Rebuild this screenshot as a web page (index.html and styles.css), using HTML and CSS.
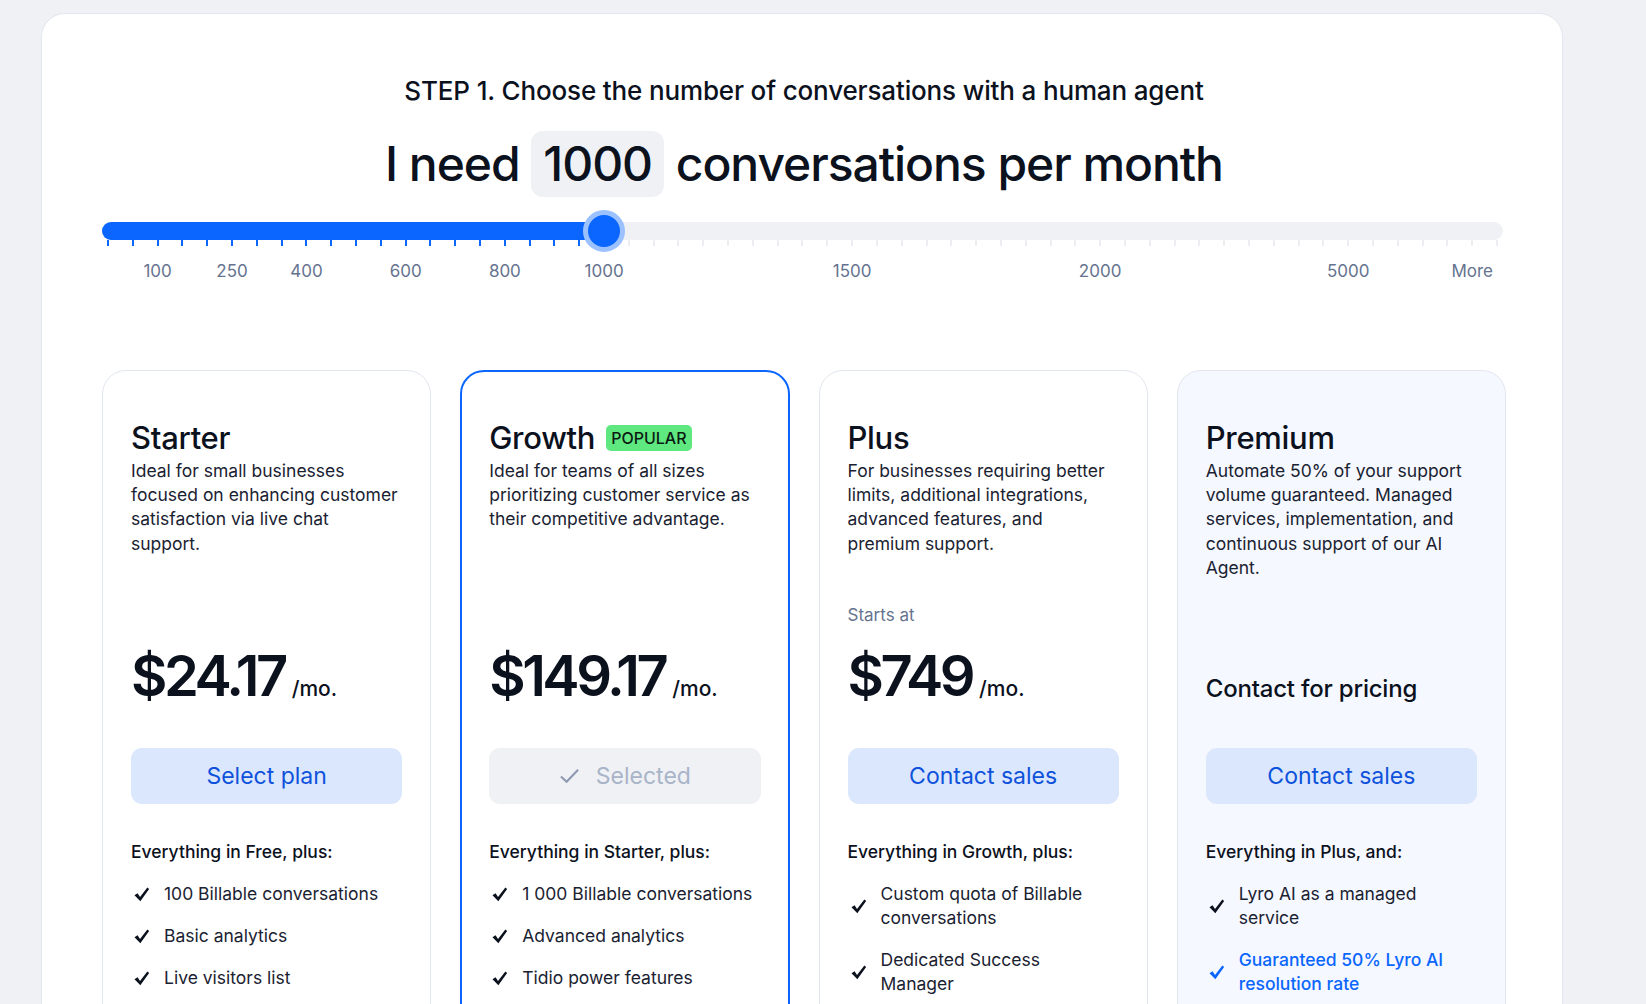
FILE: index.html
```html
<!DOCTYPE html>
<html lang="en">
<head>
<meta charset="utf-8">
<title>Pricing</title>
<link rel="stylesheet" href="styles.css">
</head>
<body>
<div class="page">
  <section class="panel">
    <h2 class="step">STEP 1. Choose the number of conversations with a human agent</h2>
    <h1 class="need">I need <span class="qty">1000</span> conversations per month</h1>

    <div class="slider">
      <div class="track">
        <div class="fill" style="width:35.83%"></div>
        <div class="thumb" style="left:35.83%"></div>
      </div>
      <div class="scale">
        <span class="tick on"></span><span class="tick on"></span><span class="tick on"></span><span class="tick on"></span><span class="tick on"></span>
        <span class="tick on"></span><span class="tick on"></span><span class="tick on"></span><span class="tick on"></span><span class="tick on"></span>
        <span class="tick on"></span><span class="tick on"></span><span class="tick on"></span><span class="tick on"></span><span class="tick on"></span>
        <span class="tick on"></span><span class="tick on"></span><span class="tick on"></span><span class="tick on"></span><span class="tick on"></span>
        <span class="tick"></span><span class="tick"></span><span class="tick"></span><span class="tick"></span><span class="tick"></span>
        <span class="tick"></span><span class="tick"></span><span class="tick"></span><span class="tick"></span><span class="tick"></span>
        <span class="tick"></span><span class="tick"></span><span class="tick"></span><span class="tick"></span><span class="tick"></span>
        <span class="tick"></span><span class="tick"></span><span class="tick"></span><span class="tick"></span><span class="tick"></span>
        <span class="tick"></span><span class="tick"></span><span class="tick"></span><span class="tick"></span><span class="tick"></span>
        <span class="tick"></span><span class="tick"></span><span class="tick"></span><span class="tick"></span><span class="tick"></span>
        <span class="tick"></span><span class="tick"></span><span class="tick"></span><span class="tick"></span><span class="tick"></span>
        <span class="tick"></span><span class="tick"></span>

        <span class="lbl" style="grid-column:3"><span>100</span></span>
        <span class="lbl" style="grid-column:6"><span>250</span></span>
        <span class="lbl" style="grid-column:9"><span>400</span></span>
        <span class="lbl" style="grid-column:13"><span>600</span></span>
        <span class="lbl" style="grid-column:17"><span>800</span></span>
        <span class="lbl" style="grid-column:21"><span>1000</span></span>
        <span class="lbl" style="grid-column:31"><span>1500</span></span>
        <span class="lbl" style="grid-column:41"><span>2000</span></span>
        <span class="lbl" style="grid-column:51"><span>5000</span></span>
        <span class="lbl" style="grid-column:56"><span>More</span></span>
      </div>
    </div>

    <div class="plans">
      <article class="card">
        <h3 class="name">Starter</h3>
        <p class="desc">Ideal for small businesses focused on enhancing customer satisfaction via live chat support.</p>
        <div class="price-area">
          <div class="price"><span class="amount">$24.17</span><span class="per">/mo.</span></div>
        </div>
        <button class="btn">Select plan</button>
        <p class="incl">Everything in Free, plus:</p>
        <ul class="feats">
          <li><svg class="chk" viewBox="0 0 16 16"><path d="M1.4 8.6 L4.3 6.9 L6.6 10.3 L13.5 1.4 L15.2 2.8 L6.9 14.4 Z"/></svg><span>100 Billable conversations</span></li>
          <li><svg class="chk" viewBox="0 0 16 16"><path d="M1.4 8.6 L4.3 6.9 L6.6 10.3 L13.5 1.4 L15.2 2.8 L6.9 14.4 Z"/></svg><span>Basic analytics</span></li>
          <li><svg class="chk" viewBox="0 0 16 16"><path d="M1.4 8.6 L4.3 6.9 L6.6 10.3 L13.5 1.4 L15.2 2.8 L6.9 14.4 Z"/></svg><span>Live visitors list</span></li>
        </ul>
      </article>

      <article class="card card-active">
        <h3 class="name">Growth <span class="badge">POPULAR</span></h3>
        <p class="desc">Ideal for teams of all sizes prioritizing customer service as their competitive advantage.</p>
        <div class="price-area">
          <div class="price"><span class="amount">$149.17</span><span class="per">/mo.</span></div>
        </div>
        <button class="btn btn-selected"><svg class="selchk" viewBox="0 0 22 18"><path d="M2 9.5 L8 15 L20 2.5"/></svg>Selected</button>
        <p class="incl">Everything in Starter, plus:</p>
        <ul class="feats">
          <li><svg class="chk" viewBox="0 0 16 16"><path d="M1.4 8.6 L4.3 6.9 L6.6 10.3 L13.5 1.4 L15.2 2.8 L6.9 14.4 Z"/></svg><span>1 000 Billable conversations</span></li>
          <li><svg class="chk" viewBox="0 0 16 16"><path d="M1.4 8.6 L4.3 6.9 L6.6 10.3 L13.5 1.4 L15.2 2.8 L6.9 14.4 Z"/></svg><span>Advanced analytics</span></li>
          <li><svg class="chk" viewBox="0 0 16 16"><path d="M1.4 8.6 L4.3 6.9 L6.6 10.3 L13.5 1.4 L15.2 2.8 L6.9 14.4 Z"/></svg><span>Tidio power features</span></li>
        </ul>
      </article>

      <article class="card">
        <h3 class="name">Plus</h3>
        <p class="desc">For businesses requiring better limits, additional integrations, advanced features, and premium support.</p>
        <div class="price-area">
          <p class="starts">Starts at</p>
          <div class="price"><span class="amount">$749</span><span class="per">/mo.</span></div>
        </div>
        <button class="btn">Contact sales</button>
        <p class="incl">Everything in Growth, plus:</p>
        <ul class="feats">
          <li><svg class="chk" viewBox="0 0 16 16"><path d="M1.4 8.6 L4.3 6.9 L6.6 10.3 L13.5 1.4 L15.2 2.8 L6.9 14.4 Z"/></svg><span>Custom quota of Billable conversations</span></li>
          <li><svg class="chk" viewBox="0 0 16 16"><path d="M1.4 8.6 L4.3 6.9 L6.6 10.3 L13.5 1.4 L15.2 2.8 L6.9 14.4 Z"/></svg><span>Dedicated Success Manager</span></li>
        </ul>
      </article>

      <article class="card card-premium">
        <h3 class="name">Premium</h3>
        <p class="desc">Automate 50% of your support volume guaranteed. Managed services, implementation, and continuous support of our AI Agent.</p>
        <div class="price-area">
          <p class="contact">Contact for pricing</p>
        </div>
        <button class="btn">Contact sales</button>
        <p class="incl">Everything in Plus, and:</p>
        <ul class="feats">
          <li><svg class="chk" viewBox="0 0 16 16"><path d="M1.4 8.6 L4.3 6.9 L6.6 10.3 L13.5 1.4 L15.2 2.8 L6.9 14.4 Z"/></svg><span>Lyro AI as a managed service</span></li>
          <li class="hl"><svg class="chk" viewBox="0 0 16 16"><path d="M1.4 8.6 L4.3 6.9 L6.6 10.3 L13.5 1.4 L15.2 2.8 L6.9 14.4 Z"/></svg><span>Guaranteed 50% Lyro AI resolution rate</span></li>
        </ul>
      </article>
    </div>
  </section>
</div>
</body>
</html>
```
FILE: styles.css
```css
* { box-sizing: border-box; }

html, body {
  margin: 0;
  padding: 0;
  background: #f0f1f5;
  font-family: Inter, "Noto Sans", "Liberation Sans", sans-serif;
  color: #0c1322;
  overflow: hidden;
}

.page {
  padding: 13px 0 0 41px;
}

.panel {
  width: 1522px;
  min-height: 1200px;
  background: #ffffff;
  border: 1px solid #e2e6ef;
  border-radius: 24px 24px 0 0;
  padding: 62px 56px 0 60px;
}

.step {
  margin: 0;
  text-align: center;
  font-size: 26px;
  line-height: 30px;
  font-weight: 500;
  letter-spacing: -0.15px;
  color: #0b111d;
}

.need {
  margin: 25px 0 0;
  text-align: center;
  font-size: 48px;
  line-height: 66px;
  font-weight: 500;
  letter-spacing: -1.05px;
  color: #0b111d;
}

.qty {
  display: inline-block;
  background: #f0f1f5;
  border-radius: 12px;
  padding: 0 12px;
  height: 66px;
}

.slider {
  margin: 25px 3px 0 0;
}

.track {
  position: relative;
  height: 18px;
  border-radius: 9px;
  background: #eff1f5;
}

.fill {
  height: 18px;
  border-radius: 9px 0 0 9px;
  background: #0a66ff;
}

.thumb {
  position: absolute;
  top: 50%;
  width: 42px;
  height: 42px;
  margin: -21px 0 0 -21px;
  border-radius: 50%;
  background: #0a66ff;
  border: 5px solid #9cc1ff;
}

.scale {
  display: grid;
  grid-template-columns: repeat(57, minmax(0, 1fr));
  grid-template-rows: 6px 50px;
  margin: 0 -6.4px;
}

.tick {
  grid-row: 1;
  justify-self: center;
  width: 2px;
  height: 6px;
  background: #eceef3;
}

.tick.on {
  background: #0a66ff;
}

.lbl {
  grid-row: 2;
  display: flex;
  justify-content: center;
  align-items: center;
  font-size: 17px;
  color: #66738f;
  white-space: nowrap;
}

.plans {
  margin-top: 74px;
  display: grid;
  grid-template-columns: repeat(4, 1fr);
  gap: 29px;
  width: 1404px;
}

.card {
  border: 1px solid #e1e6ef;
  border-radius: 24px;
  background: #ffffff;
  padding: 48px 28px 0 28px;
  min-height: 700px;
  display: flex;
  flex-direction: column;
}

.card-active {
  border: 2px solid #0a66ff;
  padding: 47px 27px 0 27px;
}

.card-premium {
  background: #f5f8fe;
}

.name {
  margin: 0;
  display: flex;
  align-items: center;
  gap: 11px;
  font-size: 31px;
  line-height: 38px;
  font-weight: 500;
  letter-spacing: -0.3px;
  color: #0b111d;
}

.badge {
  display: inline-block;
  background: #5fe880;
  color: #0a1a12;
  font-size: 16px;
  line-height: 26px;
  font-weight: 500;
  letter-spacing: 0;
  padding: 0 5px;
  border-radius: 5px;
}

.desc {
  margin: 2px 0 0;
  height: 121px;
  font-size: 17.5px;
  line-height: 24.2px;
  color: #1a2232;
}

.price-area {
  height: 128px;
  display: flex;
  flex-direction: column;
  justify-content: flex-end;
}

.starts {
  margin: 0 0 17px;
  font-size: 17px;
  line-height: 24px;
  color: #66738f;
}

.price {
  display: flex;
  align-items: baseline;
  height: 64px;
  line-height: 64px;
}

.amount {
  font-size: 56px;
  font-weight: 600;
  letter-spacing: -3.5px;
  color: #0b111d;
}

.per {
  margin-left: 7px;
  font-size: 21px;
  font-weight: 500;
  color: #0b111d;
}

.contact {
  margin: 0 0 4px;
  font-size: 24px;
  line-height: 30px;
  font-weight: 500;
  letter-spacing: -0.2px;
  color: #0b111d;
}

.btn {
  margin-top: 40px;
  height: 56px;
  width: 100%;
  border: 0;
  border-radius: 11px;
  background: #dbe7fd;
  color: #0e52dc;
  font-family: inherit;
  font-size: 23px;
  font-weight: 400;
  display: flex;
  align-items: center;
  justify-content: center;
  gap: 16px;
}

.btn-selected {
  background: #eff1f5;
  color: #a9b4c9;
}

.selchk {
  width: 21px;
  height: 18px;
  fill: none;
  stroke: #8e9ab1;
  stroke-width: 2.2;
}

.incl {
  margin: 36px 0 0;
  font-size: 17.5px;
  line-height: 24px;
  font-weight: 500;
  color: #0b111d;
}

.feats {
  list-style: none;
  margin: 18px 0 0;
  padding: 0 6px 0 0;
  display: flex;
  flex-direction: column;
  gap: 18px;
}

.feats li {
  display: flex;
  align-items: center;
  gap: 14px;
  padding-left: 2px;
  font-size: 17.5px;
  line-height: 24px;
  color: #1a2232;
}

.chk {
  flex: none;
  width: 17px;
  height: 17px;
  fill: #0b111d;
}

.feats li.hl {
  color: #0a66ff;
  font-weight: 500;
}

.feats li.hl .chk {
  fill: #0a66ff;
}
```
